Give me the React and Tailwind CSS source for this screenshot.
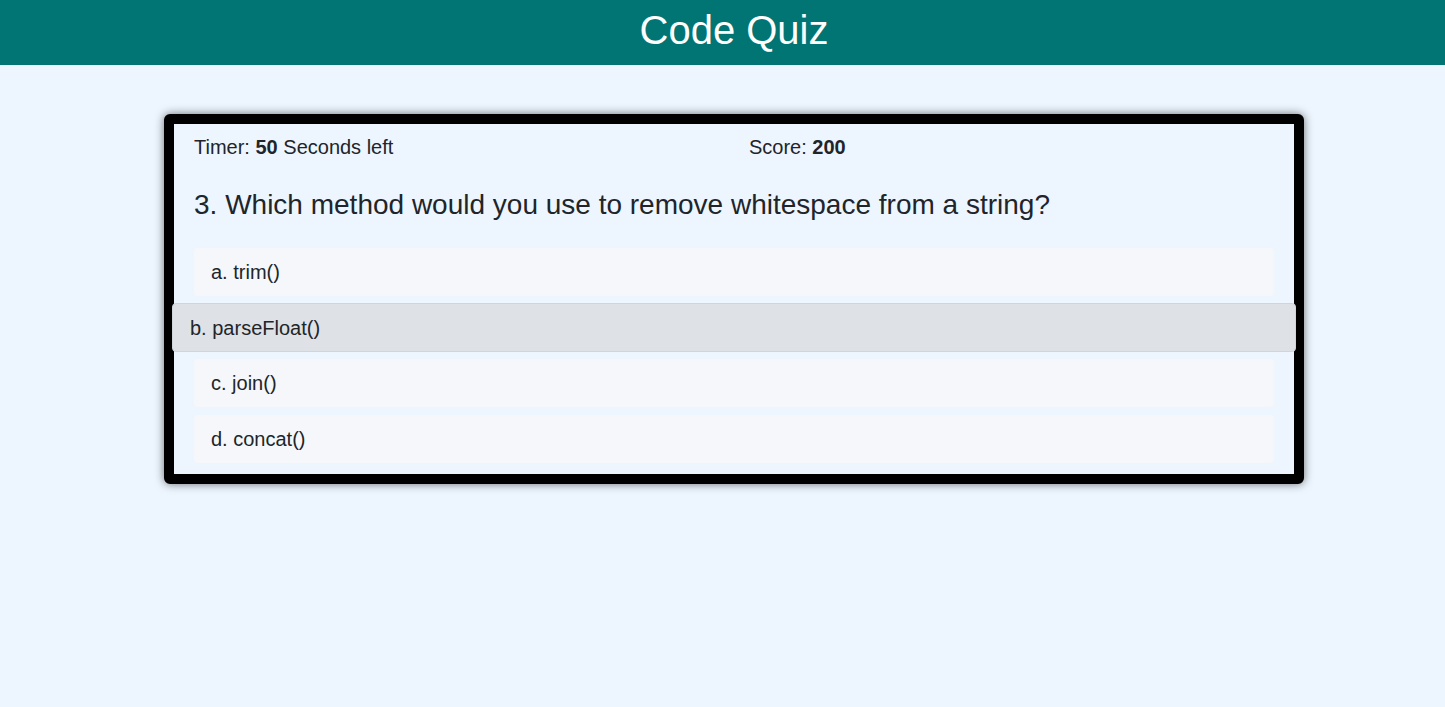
const ANSWERS = [
  { id: 'a', text: 'a. trim()' },
  { id: 'b', text: 'b. parseFloat()', hover: true },
  { id: 'c', text: 'c. join()' },
  { id: 'd', text: 'd. concat()' },
]

function Answer({ text, hover, index }) {
  if (hover) {
    return (
      <div className="mt-[7px] -mx-[22px] h-[49px] flex items-center px-[17px] rounded-[4px] border border-[#cfd5db] bg-[#dee1e6] text-[20px] text-[#212529]">
        {text}
      </div>
    )
  }
  const gap = index === 0 ? '' : index === 3 ? 'mt-[8px]' : 'mt-[7px]'
  return (
    <div className={`${gap} h-[48px] flex items-center px-[17px] rounded-[4px] bg-[#f5f7fa] text-[20px] text-[#212529]`}>
      {text}
    </div>
  )
}

export default function App() {
  return (
    <div className="min-h-[707px] bg-[#edf6ff] font-['Liberation_Sans',Arial,sans-serif]">
      <header className="h-[65px] bg-[#017573] flex items-center justify-center pl-[23px]">
        <h1 className="text-[40px] leading-none text-white -mt-[6px]">Code Quiz</h1>
      </header>

      <div className="ml-[164px] mt-[49px] w-[1140px] border-[10px] border-black rounded-[6px] shadow-[0_0_10px_rgba(0,0,0,0.55)] bg-[#edf6ff]">
        <div className="px-[20px] pt-[10px] pb-[11px]">
          <div className="flex text-[20px] leading-[27px] text-[#212529]">
            <div className="w-[555px]">
              Timer: <span className="font-bold">50</span> Seconds left
            </div>
            <div>
              Score: <span className="font-bold">200</span>
            </div>
          </div>

          <h2 className="mt-[27px] text-[28px] leading-[34px] text-[#212529]">
            3. Which method would you use to remove whitespace from a string?
          </h2>

          <div className="mt-[26px] flex flex-col">
            {ANSWERS.map((a, i) => (
              <Answer key={a.id} text={a.text} hover={a.hover} index={i} />
            ))}
          </div>
        </div>
      </div>
    </div>
  )
}
